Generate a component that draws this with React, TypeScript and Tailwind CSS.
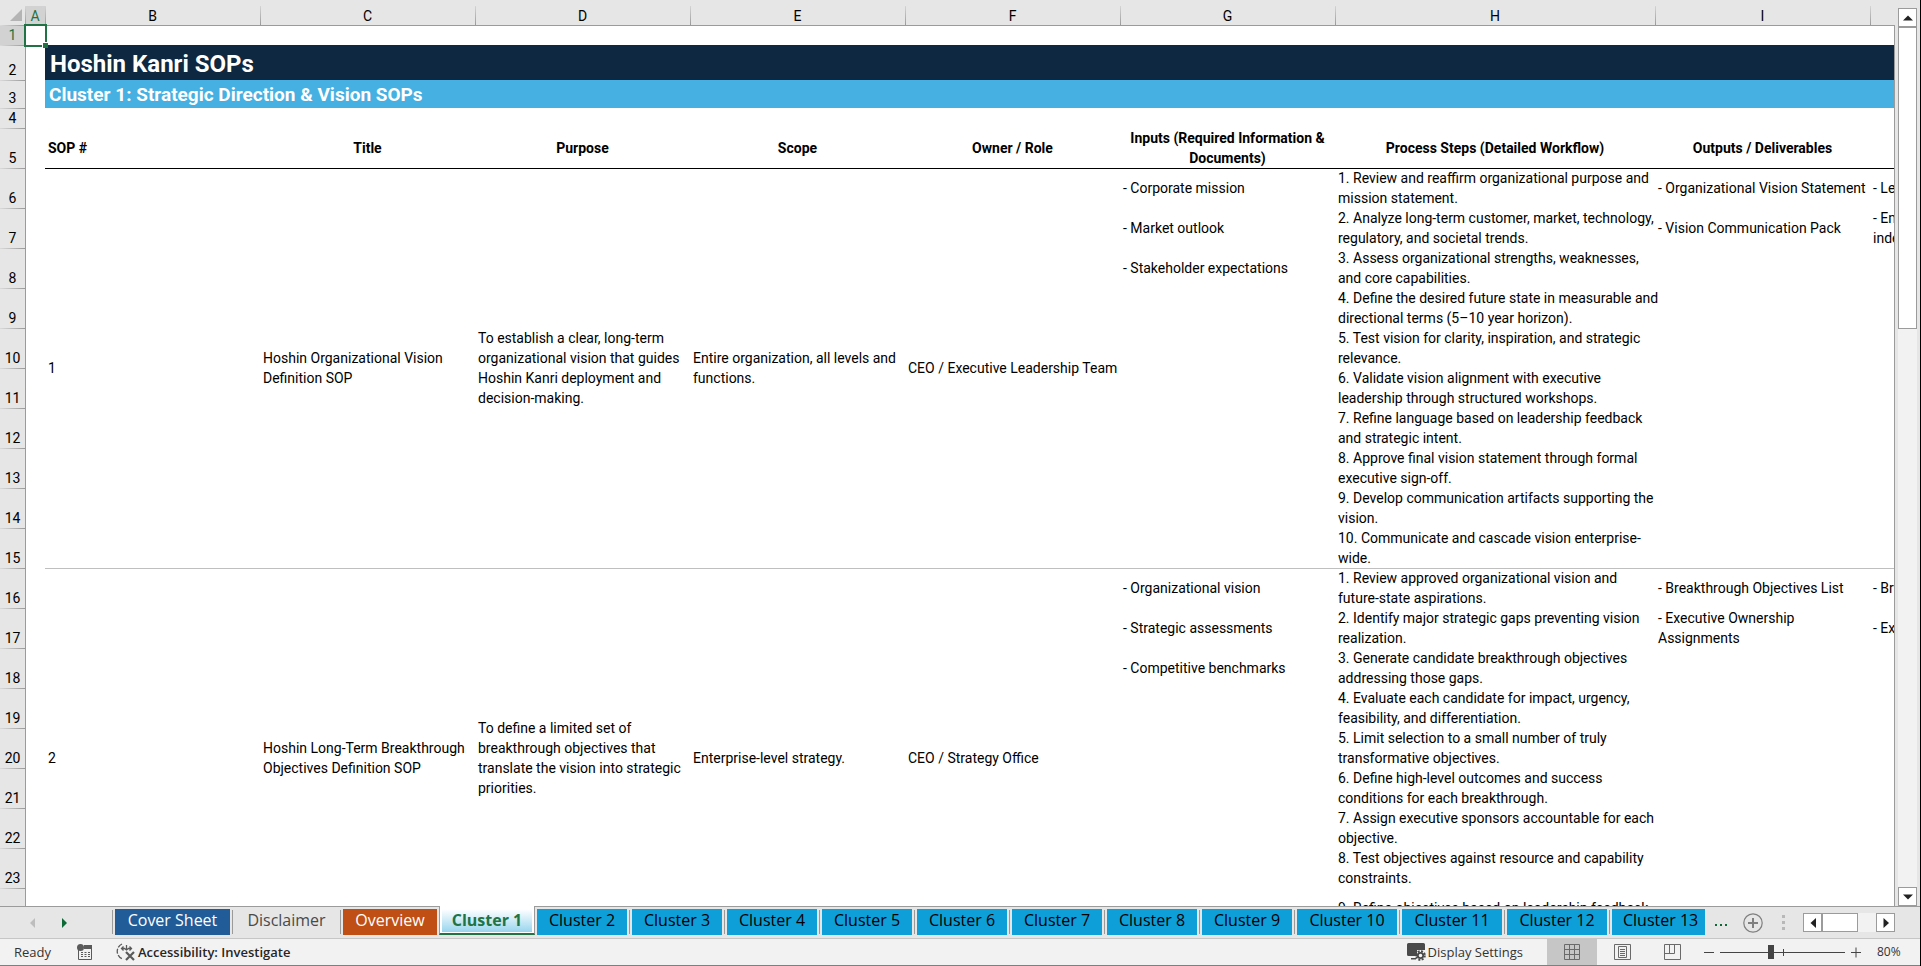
import { clsx } from 'clsx'

const columns = [
    { name: 'A', width: 'w-[20px]' },
    { name: 'B', width: 'w-[215px]' },
    { name: 'C', width: 'w-[215px]' },
    { name: 'D', width: 'w-[215px]' },
    { name: 'E', width: 'w-[215px]' },
    { name: 'F', width: 'w-[215px]' },
    { name: 'G', width: 'w-[215px]' },
    { name: 'H', width: 'w-[320px]' },
    { name: 'I', width: 'w-[215px]' },
    { name: 'J', width: 'w-[215px]' },
]

const headings = [
    'Title',
    'Purpose',
    'Scope',
    'Owner / Role',
    'Inputs (Required Information &\nDocuments)',
    'Process Steps (Detailed Workflow)',
    'Outputs / Deliverables',
    '',
]

const sops = [
    {
        id: 1,
        firstRow: 6,
        line: 'shadow-[inset_0_1px_0_#000000]',
        title: 'Hoshin Organizational Vision\nDefinition SOP',
        purpose:
            'To establish a clear, long-term\norganizational vision that guides\nHoshin Kanri deployment and\ndecision-making.',
        scope: 'Entire organization, all levels and\nfunctions.',
        owner: 'CEO / Executive Leadership Team',
        inputs: [
            '- Corporate mission',
            '- Market outlook',
            '- Stakeholder expectations',
        ],
        steps: [
            '1. Review and reaffirm organizational purpose and\nmission statement.',
            '2. Analyze long-term customer, market, technology,\nregulatory, and societal trends.',
            '3. Assess organizational strengths, weaknesses,\nand core capabilities.',
            '4. Define the desired future state in measurable and\ndirectional terms (5–10 year horizon).',
            '5. Test vision for clarity, inspiration, and strategic\nrelevance.',
            '6. Validate vision alignment with executive\nleadership through structured workshops.',
            '7. Refine language based on leadership feedback\nand strategic intent.',
            '8. Approve final vision statement through formal\nexecutive sign-off.',
            '9. Develop communication artifacts supporting the\nvision.',
            '10. Communicate and cascade vision enterprise-\nwide.',
        ],
        outputs: [
            '- Organizational Vision Statement',
            '- Vision Communication Pack',
        ],
        metrics: ['- Leadership', '- Engagement\nindex'],
    },
    {
        id: 2,
        firstRow: 16,
        line: 'shadow-[inset_0_1px_0_#bfbfbf]',
        title: 'Hoshin Long-Term Breakthrough\nObjectives Definition SOP',
        purpose:
            'To define a limited set of\nbreakthrough objectives that\ntranslate the vision into strategic\npriorities.',
        scope: 'Enterprise-level strategy.',
        owner: 'CEO / Strategy Office',
        inputs: [
            '- Organizational vision',
            '- Strategic assessments',
            '- Competitive benchmarks',
        ],
        steps: [
            '1. Review approved organizational vision and\nfuture-state aspirations.',
            '2. Identify major strategic gaps preventing vision\nrealization.',
            '3. Generate candidate breakthrough objectives\naddressing those gaps.',
            '4. Evaluate each candidate for impact, urgency,\nfeasibility, and differentiation.',
            '5. Limit selection to a small number of truly\ntransformative objectives.',
            '6. Define high-level outcomes and success\nconditions for each breakthrough.',
            '7. Assign executive sponsors accountable for each\nobjective.',
            '8. Test objectives against resource and capability\nconstraints.',
            '9. Refine objectives based on leadership feedback.',
            '',
        ],
        outputs: [
            '- Breakthrough Objectives List',
            '- Executive Ownership\nAssignments',
        ],
        metrics: ['- Breakthrough', '- Executive'],
    },
]

const blueTab = 'bg-[#0f9fd8] text-black'

const tabs = [
    { name: 'Cover Sheet', style: 'w-[115px] bg-[#215c98] text-white' },
    { name: 'Disclaimer', style: 'w-[103px] text-[#4a4a4a]' },
    { name: 'Overview', style: 'w-[94px] bg-[#c04f15] text-white' },
    { name: 'Cluster 1', style: 'active' },
    { name: 'Cluster 2', style: clsx('w-[90px]', blueTab) },
    { name: 'Cluster 3', style: clsx('w-[90px]', blueTab) },
    { name: 'Cluster 4', style: clsx('w-[90px]', blueTab) },
    { name: 'Cluster 5', style: clsx('w-[90px]', blueTab) },
    { name: 'Cluster 6', style: clsx('w-[90px]', blueTab) },
    { name: 'Cluster 7', style: clsx('w-[90px]', blueTab) },
    { name: 'Cluster 8', style: clsx('w-[90px]', blueTab) },
    { name: 'Cluster 9', style: clsx('w-[90px]', blueTab) },
    { name: 'Cluster 10', style: clsx('w-[100px]', blueTab) },
    { name: 'Cluster 11', style: clsx('w-[100px]', blueTab) },
    { name: 'Cluster 12', style: clsx('w-[100px]', blueTab) },
    { name: 'Cluster 13', style: clsx('w-[93px] pl-[11px] text-left', blueTab) },
]

function RowHeader({ row, height }: { row: number; height: string }) {
    return (
        <th
            scope="row"
            className={clsx(
                'bg-linear-to-r from-[#dadada] to-[#9b9b9b] bg-[length:100%_1px] bg-top bg-no-repeat p-0 text-center align-bottom font-normal',
                height,
                row === 1
                    ? 'bg-[#d2d2d2] text-[#217346]'
                    : 'bg-[#e6e6e6] text-black'
            )}
        >
            {row}
        </th>
    )
}

function Cell({
    text,
    line,
    rowSpan,
}: {
    text: string | number
    line?: string | false
    rowSpan?: number
}) {
    return (
        <td
            rowSpan={rowSpan}
            className={clsx('py-0 pr-0 pl-[3px] align-middle', line)}
        >
            {text}
        </td>
    )
}

function FirstColumn({ span = 1 }: { span?: number }) {
    return (
        <td rowSpan={span} className="border-l border-[#9b9b9b] p-0"></td>
    )
}

function Sheet() {
    return (
        <table className="w-[2085px] table-fixed border-separate border-spacing-0 text-sm leading-5 whitespace-pre text-black">
            <colgroup>
                <col className="w-[25px]" />
                {columns.map((column) => (
                    <col key={column.name} className={column.width} />
                ))}
            </colgroup>
            <thead>
                <tr>
                    <th className="h-[25px] bg-[#e6e6e6] p-0">
                        <svg
                            className="mt-1 ml-[10px] block"
                            width="12"
                            height="12"
                            viewBox="0 0 12 12"
                        >
                            <path d="M12 0v12H0z" fill="#b4b4b4" />
                        </svg>
                    </th>
                    {columns.map((column) => (
                        <th
                            key={column.name}
                            scope="col"
                            className={clsx(
                                'bg-linear-to-b from-[#d4d4d4] to-[#9b9b9b] bg-[length:1px_19px] bg-bottom-left bg-no-repeat px-0 pt-[6px] pb-0 text-center font-normal',
                                column.name === 'A'
                                    ? 'bg-[#d2d2d2] text-[#217346] shadow-[inset_0_6px_0_#e6e6e6]'
                                    : 'bg-[#e6e6e6]'
                            )}
                        >
                            <span className="block h-[19px]">
                                {column.name}
                            </span>
                        </th>
                    ))}
                </tr>
            </thead>
            <tbody>
                <tr>
                    <RowHeader row={1} height="h-[20px]" />
                    <td className="relative p-0">
                        <div className="absolute -top-px -right-[2px] -bottom-[2px] -left-px z-10 border-2 border-[#217346] bg-white">
                            <div className="absolute -right-[3px] -bottom-[3px] size-[6px] border-t border-l border-white bg-[#217346]"></div>
                        </div>
                    </td>
                    <td
                        colSpan={9}
                        className="shadow-[inset_0_1px_0_#9b9b9b]"
                    ></td>
                </tr>
                <tr>
                    <RowHeader row={2} height="h-[35px]" />
                    <FirstColumn />
                    <td
                        colSpan={9}
                        className="bg-[#0e2841] pt-[2px] pr-0 pb-0 pl-[5px] text-2xl leading-8 font-bold text-white"
                    >
                        Hoshin Kanri SOPs
                    </td>
                </tr>
                <tr>
                    <RowHeader row={3} height="h-[28px]" />
                    <FirstColumn />
                    <td
                        colSpan={9}
                        className="bg-[#45b0e1] pt-[2px] pr-0 pb-0 pl-[4px] text-[19px] leading-6 font-bold text-white"
                    >
                        Cluster 1: Strategic Direction &amp; Vision SOPs
                    </td>
                </tr>
                <tr>
                    <RowHeader row={4} height="h-[20px]" />
                    <FirstColumn />
                    <td colSpan={9}></td>
                </tr>
                <tr>
                    <RowHeader row={5} height="h-[40px]" />
                    <FirstColumn />
                    <th
                        scope="col"
                        className="py-0 pr-0 pl-[3px] text-left font-bold"
                    >
                        SOP #
                    </th>
                    {headings.map((heading) => (
                        <th
                            key={heading}
                            scope="col"
                            className="p-0 text-center font-bold"
                        >
                            {heading}
                        </th>
                    ))}
                </tr>
                {sops.map((sop) =>
                    sop.steps.map((step, i) => {
                        const line = i === 0 && sop.line
                        const row = sop.firstRow + i
                        return (
                            <tr key={row}>
                                <RowHeader
                                    row={row}
                                    height={row === 25 ? 'h-[20px]' : 'h-[40px]'}
                                />
                                {i === 0 && (
                                    <>
                                        <FirstColumn span={10} />
                                        <Cell rowSpan={10} line={line} text={sop.id} />
                                        <Cell rowSpan={10} line={line} text={sop.title} />
                                        <Cell rowSpan={10} line={line} text={sop.purpose} />
                                        <Cell rowSpan={10} line={line} text={sop.scope} />
                                        <Cell rowSpan={10} line={line} text={sop.owner} />
                                    </>
                                )}
                                <Cell line={line} text={sop.inputs[i] ?? ''} />
                                <Cell line={line} text={step} />
                                <Cell line={line} text={sop.outputs[i] ?? ''} />
                                <Cell line={line} text={sop.metrics[i] ?? ''} />
                            </tr>
                        )
                    })
                )}
            </tbody>
        </table>
    )
}

function Arrow({ d }: { d: string }) {
    return (
        <svg width="10" height="10" viewBox="0 0 10 10" fill="currentColor">
            <path d={d} />
        </svg>
    )
}

function VerticalScrollbar() {
    const button =
        'flex h-[19px] shrink-0 items-center justify-center border border-[#9b9b9b] bg-white text-[#222222]'
    return (
        <div className="ml-[3px] flex w-[19px] flex-col bg-[#f2f2f2]">
            <div className="h-2 bg-[#e6e6e6]"></div>
            <button aria-label="Scroll up" className={button}>
                <Arrow d="M0 7.5 5 2.5 10 7.5z" />
            </button>
            <div className="h-[302px] border border-[#9b9b9b] bg-white"></div>
            <button aria-label="Scroll down" className={clsx(button, 'mt-auto')}>
                <Arrow d="M0 2.5h10L5 7.5z" />
            </button>
        </div>
    )
}

function SheetTabs() {
    return (
        <div className="flex h-[32px] items-start bg-[#e6e6e6]">
            <div className="flex h-full w-[112px] shrink-0 items-center gap-[22px] border-t border-[#9b9b9b] pl-[28px]">
                <button aria-label="Previous sheets" className="text-[#bdbdbd]">
                    <Arrow d="M7 0v10L2 5z" />
                </button>
                <button aria-label="Next sheets" className="text-[#0b6a35]">
                    <Arrow d="M2 0v10l5-5z" />
                </button>
            </div>
            <nav className="flex shrink-0 font-['Open_Sans',sans-serif] text-base leading-[22px]">
                {tabs.map((tab, i) =>
                    tab.style === 'active' ? (
                        <button
                            key={tab.name}
                            aria-current="page"
                            className="h-[29px] w-[96px] border-x border-b-2 border-x-[#9b9b9b] border-b-[#217346] bg-white px-[2px] pt-[3px] pb-px font-bold text-[#217346]"
                        >
                            <span className="block h-[23px] bg-linear-to-b from-white to-[#97d5ee]">
                                {tab.name}
                            </span>
                        </button>
                    ) : (
                        <div
                            key={tab.name}
                            className="flex h-[29px] gap-[2px] border-t border-[#9b9b9b] pt-[2px] pr-[2px]"
                        >
                            <div
                                className={clsx(
                                    'mt-px h-6 bg-[#9b9b9b]',
                                    i === 4 ? 'w-0' : 'w-px'
                                )}
                            ></div>
                            <button
                                className={clsx(
                                    'h-[26px] overflow-hidden pb-1 whitespace-nowrap',
                                    tab.style
                                )}
                            >
                                {tab.name}
                            </button>
                        </div>
                    )
                )}
            </nav>
            <div className="flex h-full flex-1 items-center border-t border-[#9b9b9b]">
                <button
                    aria-label="More sheets"
                    className="ml-[8px] flex gap-[3px] pt-1"
                >
                    <span className="size-[2px] bg-[#0b6a35]"></span>
                    <span className="size-[2px] bg-[#0b6a35]"></span>
                    <span className="size-[2px] bg-[#0b6a35]"></span>
                </button>
                <button aria-label="New sheet" className="ml-4">
                    <svg
                        width="20"
                        height="20"
                        viewBox="0 0 20 20"
                        fill="none"
                        stroke="#7f7f7f"
                    >
                        <circle cx="10" cy="10" r="9.2" strokeWidth="1.2" />
                        <path d="M10 5v10M5 10h10" strokeWidth="2" />
                    </svg>
                </button>
                <div className="mr-[18px] ml-auto flex flex-col gap-[3px]">
                    <span className="size-[3px] bg-[#b8b8b8]"></span>
                    <span className="size-[3px] bg-[#b8b8b8]"></span>
                    <span className="size-[3px] bg-[#b8b8b8]"></span>
                </div>
                <div className="mr-[25px] flex h-[19px] w-[92px] bg-[#f2f2f2] text-[#222222]">
                    <button
                        aria-label="Scroll left"
                        className="flex w-[19px] items-center justify-center border border-[#9b9b9b] bg-white"
                    >
                        <Arrow d="M8 0v10L2.5 5z" />
                    </button>
                    <div className="w-[36px] border border-[#9b9b9b] bg-white"></div>
                    <button
                        aria-label="Scroll right"
                        className="ml-auto flex w-[19px] items-center justify-center border border-[#9b9b9b] bg-white"
                    >
                        <Arrow d="M2.5 0v10L8 5z" />
                    </button>
                </div>
            </div>
        </div>
    )
}

function StatusBar() {
    return (
        <footer className="flex h-[28px] items-center border-t border-b border-t-[#c6c6c6] border-b-[#7f7f7f] bg-[#f2f2f2] font-['Open_Sans',sans-serif] text-[13px] leading-4 text-[#333333]">
            <span className="w-[63px] pl-[14px]">Ready</span>
            <button aria-label="Record macro" className="ml-[14px]">
                <svg width="16" height="16" viewBox="0 0 16 16" fill="none">
                    <path d="M1.5 6v9.500h13V4" stroke="#5a5a5a" />
                    <path d="M7 1h8v4H7z" fill="#5a5a5a" />
                    <circle cx="3.5" cy="3.5" r="3.5" fill="#5a5a5a" />
                    <path
                        d="M4 8.5h2m1.5 0h2m1.5 0h2M4 10.5h2m1.5 0h2m1.5 0h2M4 12.5h2m1.5 0h2m1.5 0h2"
                        stroke="#5a5a5a"
                    />
                </svg>
            </button>
            <button className="ml-[23px] flex items-center gap-[2px] font-semibold text-[#262626]">
                <svg
                    width="20"
                    height="18"
                    viewBox="0 0 20 18"
                    fill="none"
                    stroke="#5a5a5a"
                >
                    <path
                        d="M6 1A8 8 0 0 0 7 16"
                        strokeDasharray="5 1.5"
                        strokeWidth="1.3"
                    />
                    <path
                        d="M5.5 5.5h3l2 1.5 2-1.5h3M7.5 3.5l-2 2 2 2M13.5 3.5l2 2-2 2M10.5 2v5"
                        strokeWidth="1.3"
                    />
                    <path d="m10 9 8 8M18 9l-8 8" strokeWidth="2.2" />
                </svg>
                Accessibility: Investigate
            </button>
            <button className="ml-auto flex items-center gap-[2px]">
                <svg width="19" height="18" viewBox="0 0 19 18">
                    <path
                        d="M1.5 0h15A1.5 1.5 0 0 1 18 1.5V7H10v6H1.5A1.5 1.5 0 0 1 0 11.5v-10A1.5 1.5 0 0 1 1.5 0zM4 15h5v1.5H4z"
                        fill="#4a4a4a"
                    />
                    <circle
                        cx="13.5"
                        cy="12.5"
                        r="4.3"
                        fill="none"
                        stroke="#4a4a4a"
                        strokeWidth="2"
                        strokeDasharray="2 1.377"
                    />
                    <circle
                        cx="13.5"
                        cy="12.5"
                        r="2.7"
                        fill="#f2f2f2"
                        stroke="#4a4a4a"
                        strokeWidth="1.8"
                    />
                </svg>
                Display Settings
            </button>
            <div className="ml-[24px] flex h-full">
                <button
                    aria-label="Normal"
                    className="flex w-[50px] items-center justify-center bg-[#c6c6c6]"
                >
                    <svg
                        width="16"
                        height="16"
                        viewBox="0 0 16 16"
                        fill="none"
                        stroke="#6a6a6a"
                    >
                        <path d="M.5.5h15v15H.5zM5.5.5v15M10.5.5v15M.5 5.5h15M.5 10.5h15" />
                    </svg>
                </button>
                <button
                    aria-label="Page layout"
                    className="flex w-[50px] items-center justify-center"
                >
                    <svg
                        width="17"
                        height="16"
                        viewBox="0 0 17 16"
                        fill="none"
                        stroke="#6a6a6a"
                    >
                        <path d="M.5.5h16v15H.5zM4.5 2.5h8v11h-8zM6 5.5h5M6 7.5h5M6 9.5h5M6 11.5h5" />
                    </svg>
                </button>
                <button
                    aria-label="Page break preview"
                    className="flex w-[50px] items-center justify-center"
                >
                    <svg
                        width="17"
                        height="16"
                        viewBox="0 0 17 16"
                        fill="none"
                        stroke="#6a6a6a"
                    >
                        <path d="M.5.5h16v15H.5zM5.5.5v9M10.5.5v9M.5 9.5h10" />
                    </svg>
                </button>
            </div>
            <button aria-label="Zoom out" className="ml-[7px] p-0">
                <svg width="10" height="11" viewBox="0 0 10 11" stroke="#444444">
                    <path d="M0 5.5h10" />
                </svg>
            </button>
            <div className="relative ml-[6px] flex h-full w-[125px] items-center">
                <div className="absolute inset-x-0 top-[13px] h-px bg-[#444444]"></div>
                <div className="absolute top-[10px] left-[63px] h-[7px] w-px bg-[#444444]"></div>
                <input
                    type="range"
                    aria-label="Zoom"
                    min={0}
                    max={200}
                    defaultValue={80}
                    className="relative h-[14px] w-full appearance-none bg-transparent [&::-webkit-slider-thumb]:h-[14px] [&::-webkit-slider-thumb]:w-[6px] [&::-webkit-slider-thumb]:appearance-none [&::-webkit-slider-thumb]:bg-[#444444]"
                />
            </div>
            <button aria-label="Zoom in" className="ml-[6px] p-0">
                <svg width="10" height="11" viewBox="0 0 10 11" stroke="#444444">
                    <path d="M0 5.5h10M5 .5v10" />
                </svg>
            </button>
            <button className="mr-[17px] ml-4 w-[26px] text-left text-xs">
                80%
            </button>
        </footer>
    )
}

export default function App() {
    return (
        <main className="flex h-screen flex-col overflow-hidden border-r border-black bg-[#e6e6e6] font-[Roboto,sans-serif]">
            <div className="flex min-h-0 flex-1">
                <div className="relative min-w-0 flex-1 overflow-hidden bg-white">
                    <Sheet />
                </div>
                <div className="mt-[25px] w-px bg-[#9b9b9b]"></div>
                <VerticalScrollbar />
                <div className="w-[3px]"></div>
            </div>
            <SheetTabs />
            <StatusBar />
        </main>
    )
}
